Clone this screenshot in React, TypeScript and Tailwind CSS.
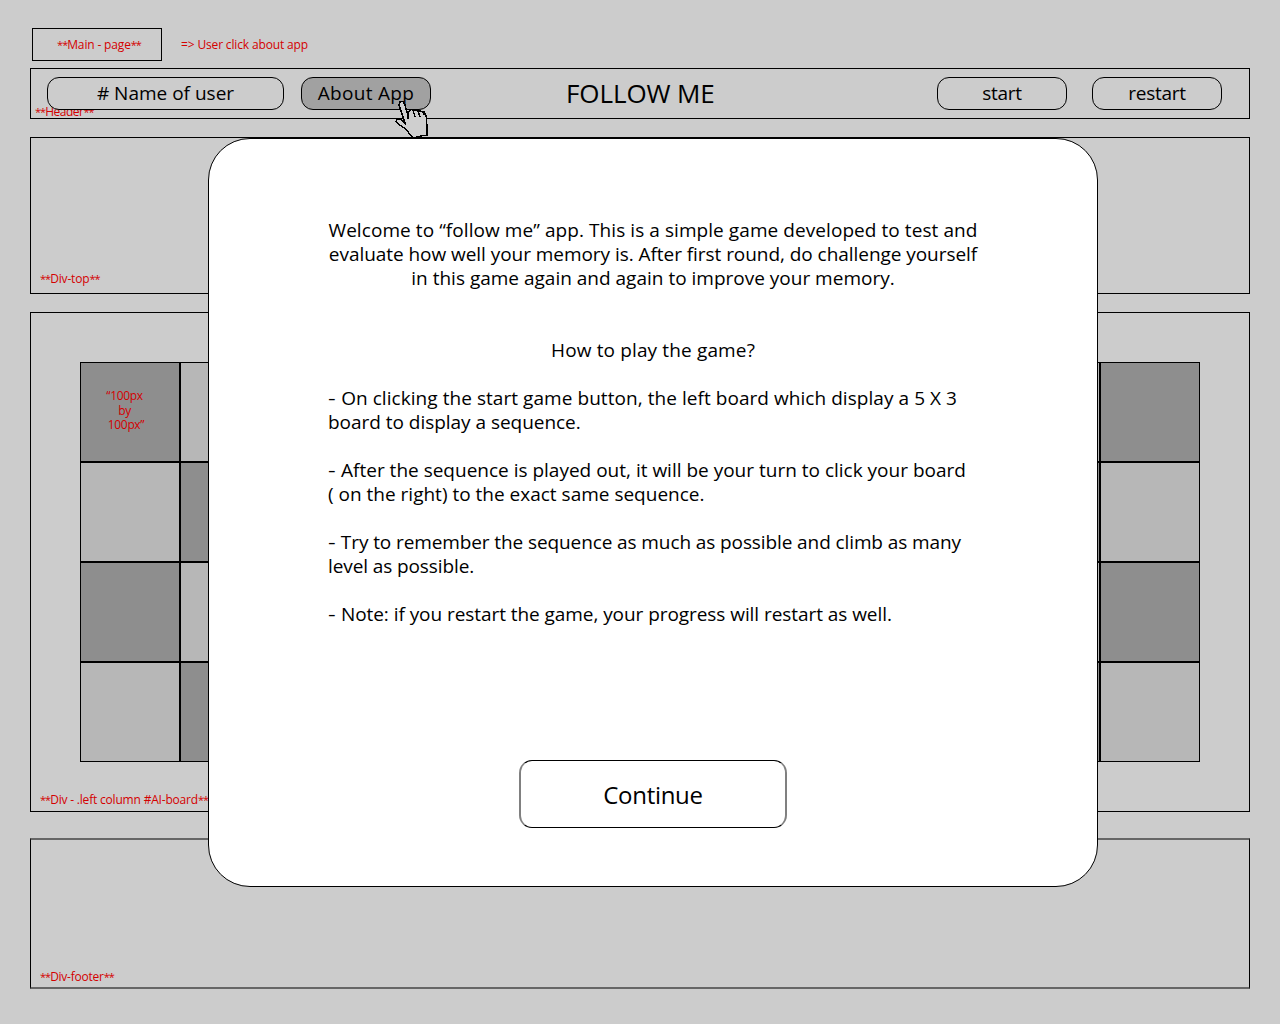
import React from "react";

function Stars() {
  return <span className="text-[11px] tracking-[-1px]">**</span>;
}

function Note({
  children,
  starred = true,
  className = "tracking-[-0.15px]",
}: {
  children: React.ReactNode;
  starred?: boolean;
  className?: string;
}) {
  return (
    <span className={`text-[12px] leading-[15px] whitespace-nowrap text-[#d40000] ${className}`}>
      {starred && <Stars />}
      {children}
      {starred && <Stars />}
    </span>
  );
}

function HeaderButton({ children, className }: { children: React.ReactNode; className: string }) {
  return (
    <button
      className={`relative h-[33px] shrink-0 rounded-[12px] border border-black pb-px text-[19px] leading-[24px] whitespace-nowrap ${className}`}
    >
      {children}
    </button>
  );
}

function Board({ label }: { label?: boolean }) {
  return (
    <div className="grid w-[500px] grid-cols-5 content-start">
      {Array.from({ length: 20 }, (_, i) => {
        const dark = (Math.floor(i / 5) + (i % 5)) % 2 === 0;
        return (
          <div
            key={i}
            className={`h-[100px] w-[100px] border border-black ${dark ? "bg-[#8e8e8e]" : "bg-[#b7b7b7]"}`}
          >
            {label && i === 0 && (
              <div className="pt-[26px] pr-[11px] text-center text-[12px] leading-[14.5px] tracking-[-0.35px] text-[#d40000]">
                “100px
                <br />
                by
                <br />
                <span className="pl-[3px]">100px”</span>
              </div>
            )}
          </div>
        );
      })}
    </div>
  );
}

function Bullet() {
  return <span className="mr-[2px] inline-block origin-left scale-x-125">-</span>;
}

function Pointer() {
  return (
    <svg
      className="absolute top-[98px] left-[392px] z-20"
      width="40"
      height="42"
      viewBox="392 98 40 42"
      shapeRendering="crispEdges"
    >
      <path
        d="M399 105L400 102L403 101.500L405 105L408 116L408 112L411 109.500L414 110.500L418 110L421 111.500L424.500 112L426.500 117.500L427 127L427 135L421 136L413 138L409.500 134L406.500 129.500L400.500 125.500L396 121.500L397.500 119L401.500 119.500L405.500 124.500L403 117Z"
        fill="#cfcfcf"
        stroke="#000"
        strokeWidth="1.4"
      />
      <path
        d="M408 111V119M413 110L415 117M418 111L420 117M423 112L424 115"
        fill="none"
        stroke="#000"
        strokeWidth="1.4"
      />
    </svg>
  );
}

export default function App() {
  return (
    <div className="relative flex h-[1024px] w-[1280px] flex-col overflow-hidden bg-[#ccc] px-[30px] pt-[28px] font-['Open_Sans','Noto_Sans',sans-serif] text-black">
      <div className="flex h-[33px] shrink-0 items-center pl-[2px]">
        <div className="flex h-[33px] w-[130px] items-center justify-center border border-black pl-[4px]">
          <Note>Main - page</Note>
        </div>
        <Note starred={false} className="ml-[19px] tracking-[-0.15px]">
          {"=> User click about app"}
        </Note>
      </div>

      <header className="relative mt-[7px] flex h-[51px] shrink-0 items-start border border-black pt-[8px] pl-[16px]">
        <Note className="absolute top-[35px] left-[4px] tracking-[-0.5px]">Header</Note>
        <HeaderButton className="w-[237px] bg-[#ccc]"># Name of user</HeaderButton>
        <HeaderButton className="ml-[17px] w-[130px] bg-[#a1a1a1] tracking-[0.3px]">About App</HeaderButton>
        <h1 className="ml-[135px] w-[150px] text-[26px] leading-[32px] tracking-[-0.1px] whitespace-nowrap">FOLLOW ME</h1>
        <HeaderButton className="ml-[221px] w-[130px] tracking-[-0.3px]">start</HeaderButton>
        <HeaderButton className="ml-[25px] w-[130px] tracking-[-0.3px]">restart</HeaderButton>
      </header>

      <section className="mt-[18px] flex h-[157px] shrink-0 items-end border border-black pb-[7px] pl-[9px]">
        <Note>Div-top</Note>
      </section>

      <main className="mt-[18px] flex h-[500px] shrink-0 border border-black">
        <section className="flex w-[609px] flex-col justify-between pt-[49px] pb-[4px]">
          <div className="pl-[49px]">
            <Board label />
          </div>
          <Note className="pl-[9px] tracking-[-0.19px]">Div - .left column #AI-board</Note>
        </section>
        <section className="flex w-[609px] justify-end pt-[49px] pr-[49px]">
          <Board />
        </section>
      </main>

      <footer className="mt-[26px] flex h-[151px] shrink-0 items-end border-x border-y-2 border-x-black border-y-[#666] pb-[3px] pl-[9px]">
        <Note className="tracking-[-0.25px]">Div-footer</Note>
      </footer>

      <div
        role="dialog"
        className="absolute top-[138px] left-[208px] z-10 flex h-[749px] w-[890px] flex-col items-center rounded-[42px] border border-black bg-white pt-[79px]"
      >
        <div className="w-[650px] text-[19px] leading-[24px] whitespace-nowrap">
          <p className="flex flex-col items-center">
            <span className="tracking-[0.07px]">
              Welcome to “follow me” app. This is a simple game developed to test and
            </span>
            <span className="tracking-[-0.05px]">
              evaluate how well your memory is. After first round, do challenge yourself
            </span>
            <span>in this game again and again to improve your memory.</span>
          </p>
          <h2 className="mt-[48px] text-center tracking-[0.14px]">How to play the game?</h2>
          <p className="mt-[24px]">
            <span className="tracking-[0.055px]">
              <Bullet /> On clicking the start game button, the left board which display a 5 X 3
            </span>
            <br />
            <span className="tracking-[-0.03px]">board to display a sequence.</span>
          </p>
          <p className="mt-[24px]">
            <Bullet /> After the sequence is played out, it will be your turn to click your board
            <br />( on the right) to the exact same sequence.
          </p>
          <p className="mt-[24px] tracking-[-0.1px]">
            <Bullet /> Try to remember the sequence as much as possible and climb as many
            <br />
            level as possible.
          </p>
          <p className="mt-[24px] tracking-[-0.06px]">
            <Bullet /> Note: if you restart the game, your progress will restart as well.
          </p>
        </div>
        <button className="mt-[134px] h-[68px] w-[268px] rounded-[13px] border-x-2 border-y border-x-[#808080] border-y-black pt-[2px] text-[24px] tracking-[-0.3px]">
          Continue
        </button>
      </div>

      <Pointer />
    </div>
  );
}
